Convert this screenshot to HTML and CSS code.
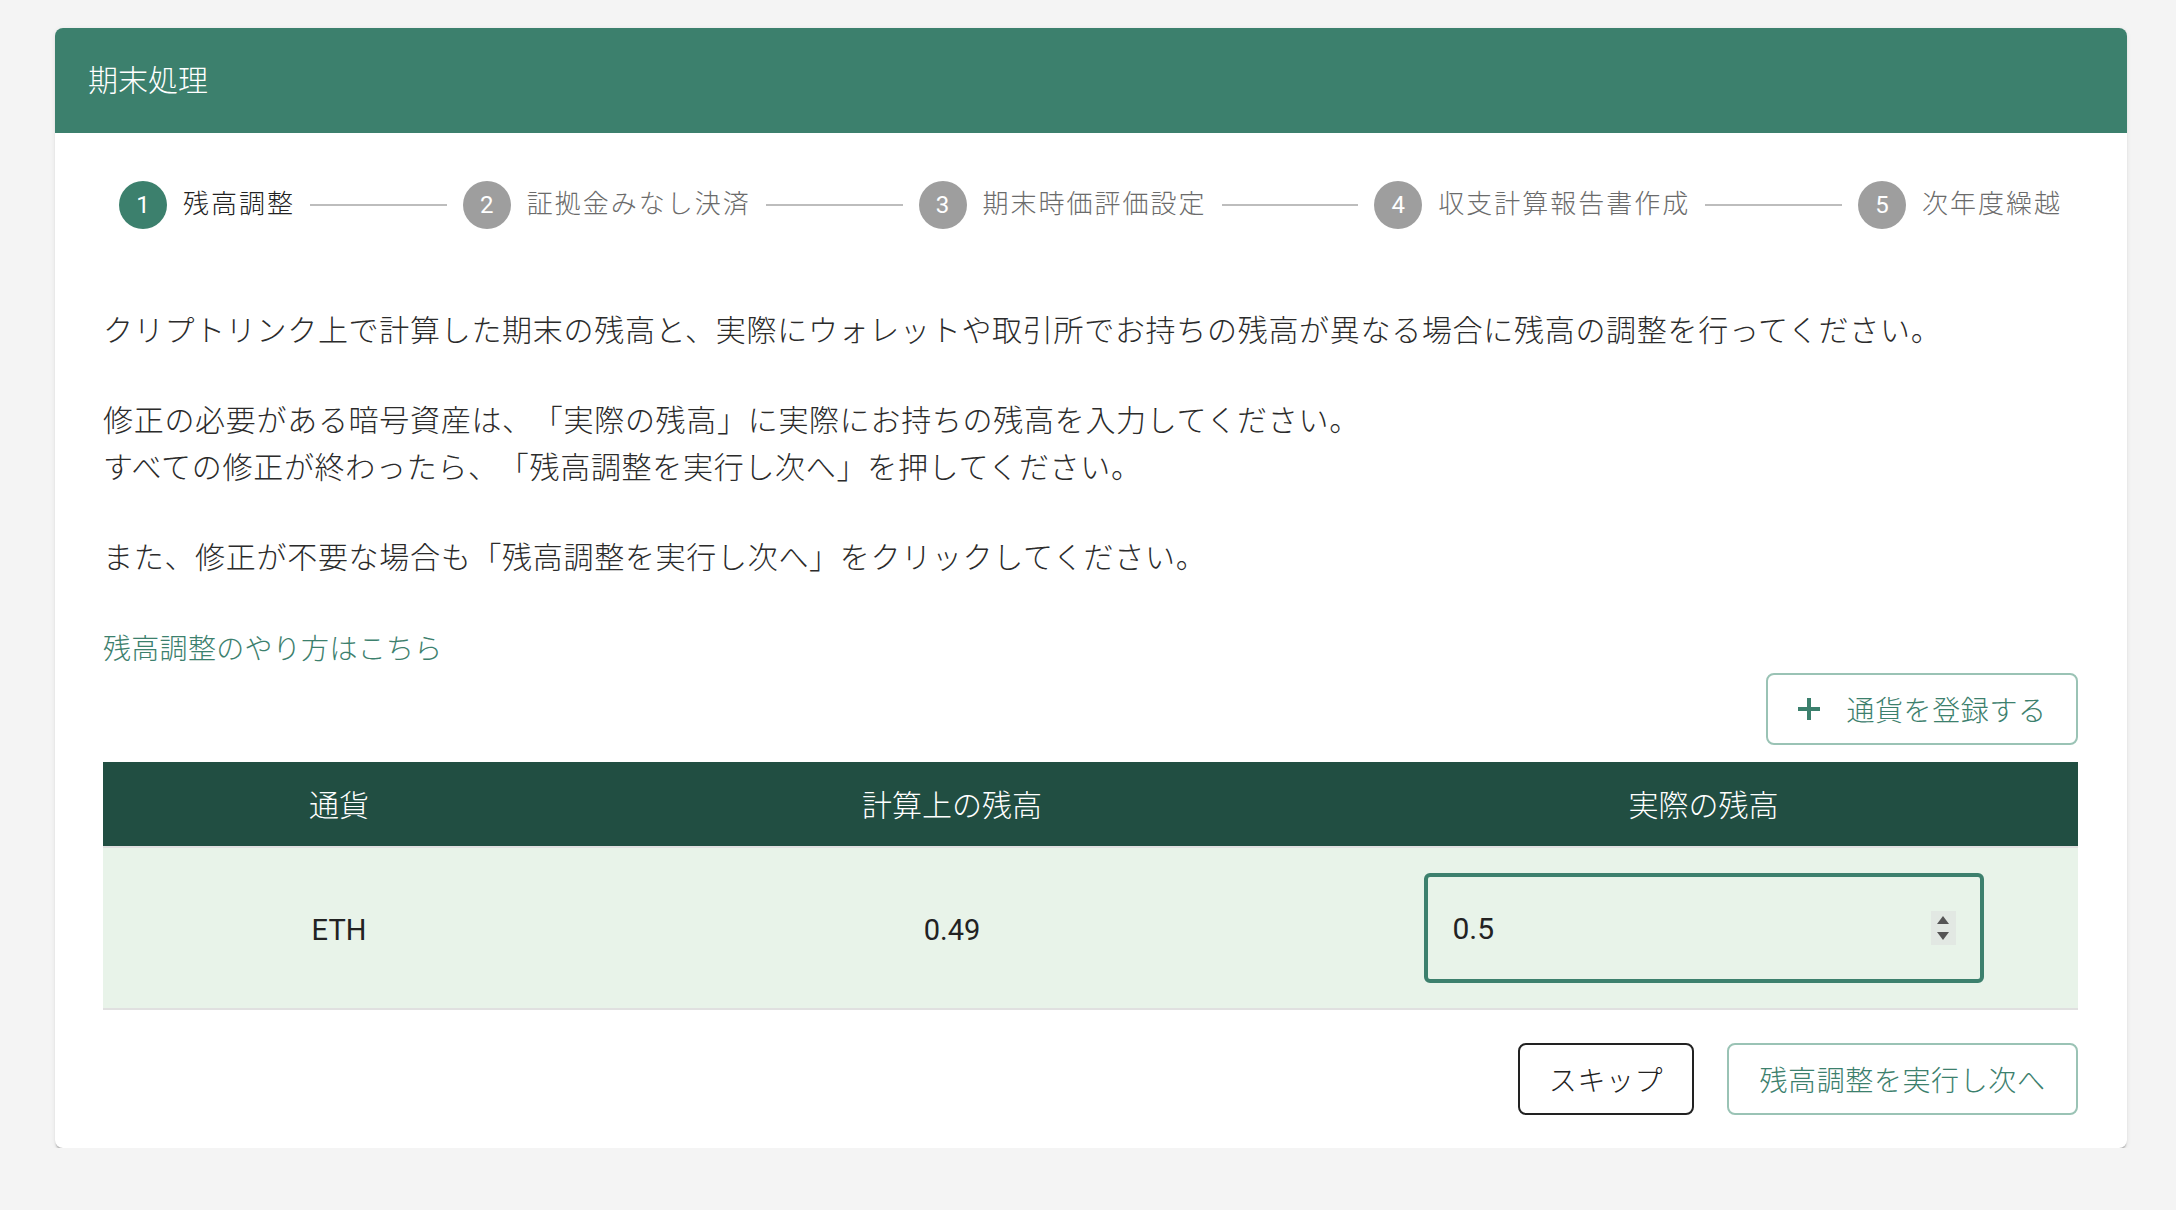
FILE: index.html
```html
<!DOCTYPE html>
<html lang="ja">
<head>
<meta charset="utf-8">
<title>期末処理</title>
<link rel="stylesheet" href="styles.css">
</head>
<body>
<div class="card">
  <div class="card-header"><span class="card-title">期末処理</span></div>
  <div class="card-body">
    <div class="stepper">
      <div class="step active"><span class="step-icon">1</span><span class="step-label">残高調整</span></div>
      <div class="connector"></div>
      <div class="step"><span class="step-icon">2</span><span class="step-label">証拠金みなし決済</span></div>
      <div class="connector"></div>
      <div class="step"><span class="step-icon">3</span><span class="step-label">期末時価評価設定</span></div>
      <div class="connector"></div>
      <div class="step"><span class="step-icon">4</span><span class="step-label">収支計算報告書作成</span></div>
      <div class="connector"></div>
      <div class="step"><span class="step-icon">5</span><span class="step-label">次年度繰越</span></div>
    </div>

    <div class="description">
      <p>クリプトリンク上で計算した期末の残高と、実際にウォレットや取引所でお持ちの残高が異なる場合に残高の調整を行ってください。</p>
      <p>修正の必要がある暗号資産は、「実際の残高」に実際にお持ちの残高を入力してください。<br>すべての修正が終わったら、「残高調整を実行し次へ」を押してください。</p>
      <p>また、修正が不要な場合も「残高調整を実行し次へ」をクリックしてください。</p>
    </div>

    <a class="help-link" href="#">残高調整のやり方はこちら</a>

    <div class="toolbar">
      <button class="btn btn-outline-green btn-add" type="button">
        <svg class="plus" viewBox="0 0 24 24" width="24" height="24"><path d="M12 1v22M1 12h22" stroke="#3c806d" stroke-width="4" fill="none"/></svg>
        <span>通貨を登録する</span>
      </button>
    </div>

    <table class="balance-table">
      <colgroup>
        <col class="col-currency">
        <col class="col-calc">
        <col class="col-actual">
      </colgroup>
      <thead>
        <tr><th>通貨</th><th>計算上の残高</th><th>実際の残高</th></tr>
      </thead>
      <tbody>
        <tr>
          <td>ETH</td>
          <td>0.49</td>
          <td>
            <div class="number-field">
              <input class="number-input" type="text" value="0.5">
              <span class="spinner">
                <svg viewBox="0 0 14 26" width="14" height="26"><path d="M7 1 L13 9 L1 9 Z" fill="#555"/><path d="M1 17 L13 17 L7 25 Z" fill="#555"/></svg>
              </span>
            </div>
          </td>
        </tr>
      </tbody>
    </table>

    <div class="actions">
      <button class="btn btn-outline-dark btn-skip" type="button">スキップ</button>
      <button class="btn btn-outline-green btn-next" type="button">残高調整を実行し次へ</button>
    </div>
  </div>
</div>
</body>
</html>
```

FILE: styles.css
```css
* {
  box-sizing: border-box;
}

html, body {
  margin: 0;
  padding: 0;
}

body {
  background: #f4f4f4;
  font-family: Roboto, "Noto Sans CJK JP", sans-serif;
  color: #2b2b2b;
  padding: 28px 0 0 55px;
  text-spacing-trim: space-all;
}

.card {
  width: 2072px;
  background: #ffffff;
  border-radius: 8px;
  box-shadow: 0 3px 2px -1px rgba(0, 0, 0, 0.28), 0 1px 5px rgba(0, 0, 0, 0.08);
  overflow: hidden;
}

.card-header {
  height: 105px;
  background: #3c806d;
  color: #ffffff;
  font-size: 30px;
  font-weight: 300;
  display: flex;
  align-items: center;
  padding-left: 33px;
  padding-bottom: 6px;
}

.card-body {
  padding: 48px 49px 33px 48px;
}

/* Stepper */
.stepper {
  display: flex;
  align-items: center;
  padding: 0 16px;
  height: 48px;
}

.step {
  display: flex;
  align-items: center;
  gap: 16px;
}

.step-icon {
  width: 48px;
  height: 48px;
  border-radius: 50%;
  background: #9e9e9e;
  color: #ffffff;
  font-family: Roboto, sans-serif;
  font-size: 24px;
  display: flex;
  align-items: center;
  justify-content: center;
}

.step.active .step-icon {
  background: #3c806d;
}

.step-label {
  font-size: 26px;
  font-weight: 300;
  letter-spacing: 2px;
  color: #6b6b6b;
  white-space: nowrap;
  line-height: 1;
  padding-bottom: 2px;
}

.step.active .step-label {
  color: #222222;
}

.connector {
  flex: 1;
  height: 2px;
  background: #bdbdbd;
  margin: 0 16px 0 15px;
}

/* Description */
.description {
  margin-top: 78px;
  font-size: 30px;
  font-weight: 300;
  line-height: 47px;
  letter-spacing: 0.7px;
  color: #2b2b2b;
}

.description p {
  margin: 0 0 43px;
}

.description p:last-child {
  margin-bottom: 0;
}

.help-link {
  display: block;
  margin-top: 45px;
  font-size: 28px;
  font-weight: 300;
  line-height: 47px;
  letter-spacing: 0.3px;
  color: #3c806d;
  text-decoration: none;
}

/* Buttons */
.toolbar {
  display: flex;
  justify-content: flex-end;
}

.btn {
  font-family: "Noto Sans CJK JP", sans-serif;
  font-size: 28px;
  font-weight: 300;
  letter-spacing: 0.6px;
  height: 72px;
  border-radius: 8px;
  background: #ffffff;
  cursor: pointer;
  display: inline-flex;
  align-items: center;
  justify-content: center;
}

.btn-outline-green {
  border: 2px solid #9ac3b5;
  color: #3c806d;
}

.btn-outline-dark {
  border: 2px solid #222222;
  color: #222222;
}

.btn-add {
  width: 312px;
  gap: 25px;
  padding: 0;
}

.plus {
  display: block;
}

/* Table */
.balance-table {
  margin-top: 17px;
  width: 100%;
  border-collapse: collapse;
  table-layout: fixed;
}

.col-currency { width: 472px; }
.col-calc { width: 754px; }
.col-actual { width: 749px; }

.balance-table th {
  background: #214e42;
  color: #ffffff;
  font-weight: 300;
  font-size: 30px;
  height: 85px;
  padding: 0 0 2px;
  border-bottom: 2px solid #e0e0e0;
  text-align: center;
}

.balance-table td {
  background: #e8f3e9;
  height: 162px;
  padding: 3px 0 0;
  text-align: center;
  font-size: 29px;
  color: #222222;
  border-bottom: 2px solid #e0e0e0;
}

.number-field {
  width: 560px;
  height: 110px;
  margin: -3px auto 0;
  border: 4px solid #3c806d;
  border-radius: 6px;
  display: flex;
  align-items: center;
  padding: 0 24px 0 25px;
}

.number-input {
  flex: 1;
  min-width: 0;
  border: none;
  outline: none;
  background: transparent;
  font-family: Roboto, sans-serif;
  font-size: 30px;
  color: #222222;
  padding: 0;
}

.spinner {
  width: 25px;
  height: 34px;
  background: #e2e8e3;
  display: flex;
  align-items: center;
  justify-content: center;
}

.spinner svg {
  display: block;
}

/* Actions */
.actions {
  margin-top: 33px;
  display: flex;
  justify-content: flex-end;
  gap: 33px;
}

.btn-skip {
  width: 176px;
}

.btn-next {
  width: 351px;
}
```
